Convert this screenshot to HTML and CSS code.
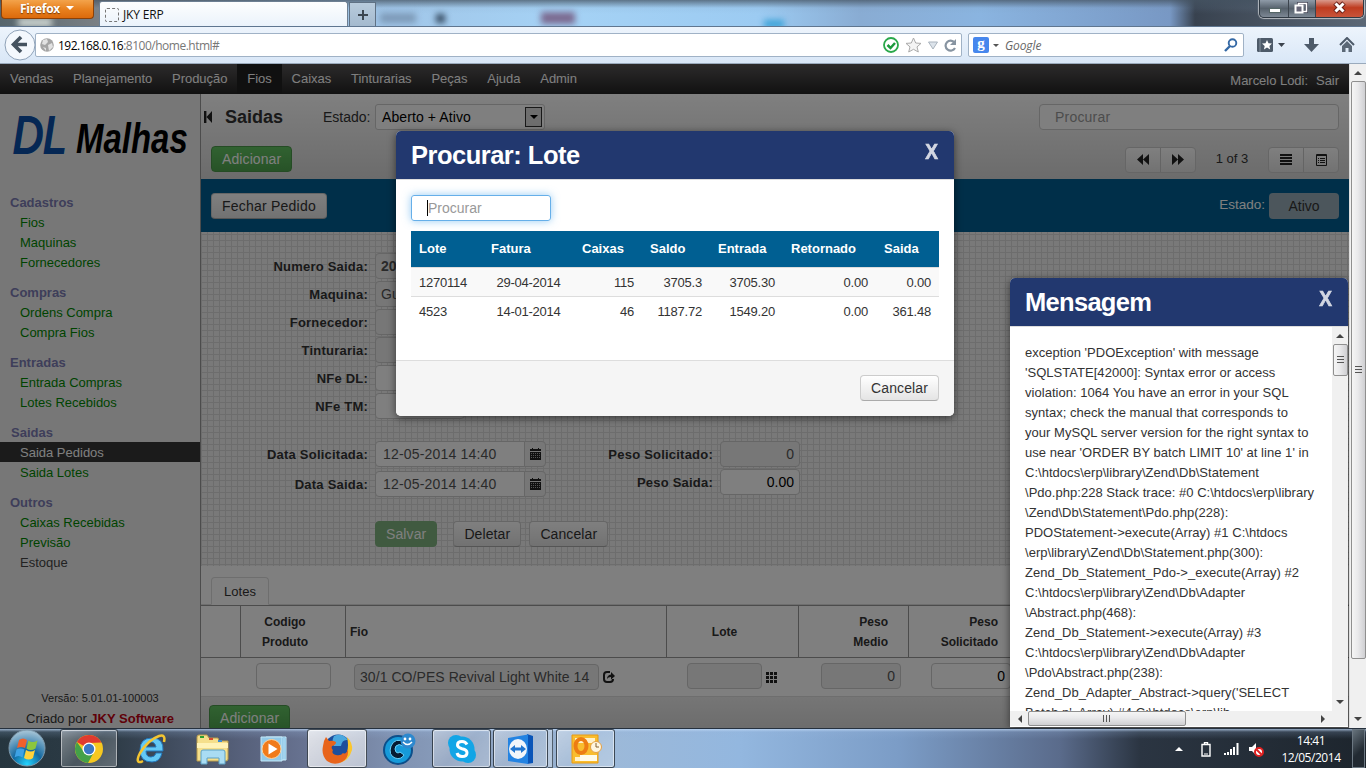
FILE: index.html
```html
<!DOCTYPE html>
<html lang="pt-BR">
<head>
<meta charset="utf-8">
<title>JKY ERP</title>
<link rel="stylesheet" href="styles.css">
</head>
<body>
<div class="screen">
  <header class="titlebar">
    <div class="blobs"><i class="b1"></i><i class="b2"></i><i class="b3"></i><i class="b4"></i><i class="b5"></i></div>
    <div class="ffbtn">Firefox <span class="tri"></span></div>
    <div class="tab"><i class="fav"></i><span>JKY ERP</span></div>
    <div class="newtab"><svg width="10" height="10"><path d="M5 0v10M0 5h10" stroke="#3c4650" stroke-width="2"/></svg></div>
    <div class="winbtns">
      <span class="wb"><svg width="28" height="18"><rect x="9.500" y="8.500" width="11" height="4" fill="#fff" stroke="#566"/></svg></span>
      <span class="wb"><svg width="26" height="18"><path d="M9.500 3.500h8v8h-8z" fill="none" stroke="#445" stroke-width="3"/><path d="M9.500 3.500h8v8h-8z" fill="none" stroke="#fff" stroke-width="1.500"/><rect x="6.500" y="5.500" width="7" height="7" fill="#667" stroke="#fff" stroke-width="2"/></svg></span>
      <span class="wb red"><svg width="47" height="18"><path d="M19 3l9 9M28 3l-9 9" stroke="#6a2018" stroke-width="5"/><path d="M19.500 3.500l8 8M27.500 3.500l-8 8" stroke="#fff" stroke-width="3"/></svg></span>
    </div>
  </header>

  <div class="toolbar">
    <div class="back"><svg width="32" height="32"><circle cx="16" cy="16" r="15" fill="#f4f8fd" stroke="#8fa2b8"/><path d="M17 8l-7.500 7.500L17 23M10 15.500h13" fill="none" stroke="#45525f" stroke-width="3.600"/></svg></div>
    <div class="url">
      <svg class="globe" width="14" height="14"><circle cx="7" cy="7" r="6.800" fill="#a5a5a5"/><path d="M3 2l4-1 1 3-3 3-3-1zM8 7l4-2 1 4-4 4zM3 9l3 1v3z" fill="#e2e2e2"/></svg>
      <span class="addr"><b>192.168.0.16</b>:8100/home.html#</span>
      <span class="urlicons">
        <svg width="16" height="16"><circle cx="8" cy="8" r="7" fill="#fff" stroke="#2aa84a" stroke-width="1.800"/><path d="M4.500 8l3 3 4.500-5" fill="none" stroke="#1c9a3c" stroke-width="2.500"/></svg>
        <svg width="17" height="16"><path d="M8.500 1l2.200 5 5.300.4-4 3.500 1.300 5.100-4.800-2.700L3.700 15 5 9.900l-4-3.500L6.300 6z" fill="#f4f4f4" stroke="#aaa"/></svg>
        <svg width="10" height="9"><path d="M.5 1h9L5 8z" fill="#dce3ea" stroke="#a9b3bd"/></svg>
        <svg width="13" height="13"><path d="M10.500 3.500A5 5 0 1 0 11 9" fill="none" stroke="#8794a1" stroke-width="2.200"/><path d="M12 0v6H6z" fill="#8794a1"/></svg>
      </span>
    </div>
    <div class="search">
      <span class="g">g</span><i class="sdown"></i><em>Google</em>
      <svg width="14" height="14"><circle cx="8.500" cy="5" r="3.800" fill="none" stroke="#3569a5" stroke-width="1.900"/><path d="M6 8L1 13" stroke="#3569a5" stroke-width="2.400"/></svg>
    </div>
    <div class="tools">
      <svg width="28" height="16"><rect x="0" y="1" width="16" height="14" rx="1.500" fill="#4d5a69"/><path d="M3 1v14" stroke="#8793a0"/><path d="M10 3l1.500 3.300 3.500.3-2.600 2.300.8 3.600-3.200-1.900-3.100 1.900.8-3.600L5 6.600l3.500-.3z" fill="#fff"/><path d="M21 6h7l-3.500 4z" fill="#3b434d"/></svg>
      <svg width="16" height="16"><path d="M5 1h5v6h5l-7.500 8L0 7h5z" fill="#4d5a69"/></svg>
      <svg width="16" height="16"><path d="M1 8l7-7 7 7" fill="none" stroke="#4d5a69" stroke-width="2"/><path d="M3 9l5-5 5 5v6H9.500v-4h-3v4H3z" fill="#5b6876"/></svg>
    </div>
  </div>

  <div class="view">
    <div class="page">
      <nav class="nav"><a>Vendas</a><a>Planejamento</a><a>Produção</a><a class="on">Fios</a><a>Caixas</a><a>Tinturarias</a><a>Peças</a><a>Ajuda</a><a>Admin</a><span class="user"><span>Marcelo Lodi:</span><span>Sair</span></span></nav>
      <div class="cols">
        <aside class="side">
          <svg class="logo" width="200" height="76"><text transform="translate(13 59) scale(.82 1)" class="dl">DL</text><text transform="translate(76 59) scale(.785 1)" class="ml">Malhas</text></svg>
          <div class="grp"><h4>Cadastros</h4><a>Fios</a><a>Maquinas</a><a>Fornecedores</a></div>
          <div class="grp"><h4>Compras</h4><a>Ordens Compra</a><a>Compra Fios</a></div>
          <div class="grp"><h4>Entradas</h4><a>Entrada Compras</a><a>Lotes Recebidos</a></div>
          <div class="grp"><h4 class="in">Saidas</h4><a class="cur">Saida Pedidos</a><a>Saida Lotes</a></div>
          <div class="grp"><h4>Outros</h4><a>Caixas Recebidas</a><a>Previsão</a><a class="off">Estoque</a></div>
          <div class="ver"><small>Versão: 5.01.01-100003</small><p>Criado por <b>JKY Software</b></p></div>
        </aside>
        <main class="main">
          <section class="head">
            <div class="hrow r1">
              <svg width="8" height="12"><path d="M0 0h2.400v12H0zM8 0v12L2.500 6z" fill="#222"/></svg>
              <h2>Saidas</h2><span class="est">Estado:</span>
              <div class="select">Aberto + Ativo<span class="dd"><i></i></span></div>
              <div class="find">Procurar</div>
            </div>
            <div class="hrow r2">
              <span class="btn green">Adicionar</span>
              <div class="bgroup pg"><span><svg width="12" height="11"><path d="M6 0v11L0 5.500zM12 0v11L6 5.500z"/></svg></span><span><svg width="12" height="11"><path d="M0 0v11l6-5.500zM6 0v11l6-5.500z"/></svg></span></div>
              <span class="count">1 of 3</span>
              <div class="bgroup"><span><svg width="12" height="11"><path d="M0 0h12v2H0zM0 3h12v2H0zM0 6h12v2H0zM0 9h12v2H0z"/></svg></span><span><svg width="11" height="12"><path d="M.5 .5h10v11H.5z" fill="none" stroke="#222"/><path d="M0 1.500h11" stroke="#222"/><path d="M2 4.500h1M4 4.500h5M2 6.500h1M4 6.500h5M2 8.500h1M4 8.500h5" stroke="#222"/></svg></span></div>
            </div>
          </section>
          <section class="band"><span class="btn">Fechar Pedido</span><span class="bl">Estado:</span><span class="ativo">Ativo</span></section>
          <section class="form">
            <div class="frow"><label>Numero Saida:</label><div class="inp dis bold w90">20</div></div>
            <div class="frow"><label>Maquina:</label><div class="inp dis w170">Gu</div></div>
            <div class="frow"><label>Fornecedor:</label><div class="inp dis w170"></div></div>
            <div class="frow"><label>Tinturaria:</label><div class="inp dis w170"></div></div>
            <div class="frow"><label>NFe DL:</label><div class="inp w90"></div></div>
            <div class="frow"><label>NFe TM:</label><div class="inp w90"></div></div>
            <div class="dates">
              <div class="dcol">
                <div class="frow"><label>Data Solicitada:</label><div class="inp date">12-05-2014 14:40</div><span class="cal"><svg width="11" height="12"><path d="M0 1h2V0h1v1h5V0h1v1h2v2H0zM0 4h11v8H0z"/><path d="M1 5.500h9M1 7.500h9M1 9.500h9" stroke="#aaa" stroke-dasharray="1 1"/></svg></span></div>
                <div class="frow"><label>Data Saida:</label><div class="inp date">12-05-2014 14:40</div><span class="cal"><svg width="11" height="12"><path d="M0 1h2V0h1v1h5V0h1v1h2v2H0zM0 4h11v8H0z"/><path d="M1 5.500h9M1 7.500h9M1 9.500h9" stroke="#aaa" stroke-dasharray="1 1"/></svg></span></div>
              </div>
              <div class="pcol">
                <div class="frow"><label>Peso Solicitado:</label><div class="inp dis num w80">0</div></div>
                <div class="frow"><label>Peso Saida:</label><div class="inp num w80 dark">0.00</div></div>
              </div>
            </div>
            <div class="acts"><span class="btn green faded">Salvar</span><span class="btn del">Deletar</span><span class="btn wide">Cancelar</span></div>
          </section>
          <section class="lots">
            <div class="tabs"><span>Lotes</span></div>
            <div class="lh"><div></div><div class="c">Codigo<br>Produto</div><div>Fio</div><div class="c lt">Lote</div><div class="r">Peso<br>Medio</div><div class="r">Peso<br>Solicitado</div><div></div></div>
            <div class="lr">
              <div></div>
              <div class="k1"><div class="inp w75"></div></div>
              <div class="k2"><div class="inp dis w245">30/1 CO/PES Revival Light White 14</div><svg width="12" height="12"><path d="M7 1H4Q1 1 1 4v4q0 3 3 3h3q3 0 3-3" fill="none" stroke="#222" stroke-width="2"/><path d="M4 8q0-4 4-4.500V1l4 4-4 3.500V6Q5 6 4 8z"/></svg></div>
              <div class="k3"><div class="inp dis w75"></div><svg width="11" height="11"><path d="M0 0h3v3H0zM4 0h3v3H4zM8 0h3v3H8zM0 4h3v3H0zM4 4h3v3H4zM8 4h3v3H8zM0 8h3v3H0zM4 8h3v3H4zM8 8h3v3H8z"/></svg></div>
              <div class="k1"><div class="inp dis num w80">0</div></div>
              <div class="k1"><div class="inp num w80 dark">0</div></div>
              <div></div>
            </div>
            <div class="lf"><span class="btn green">Adicionar</span></div>
          </section>
        </main>
      </div>
      <div class="shade"></div>

      <div class="modal lot">
        <div class="mh"><h3>Procurar: Lote</h3><b class="x">X</b></div>
        <div class="mb">
          <div class="focus"><i></i>Procurar</div>
          <table>
            <tr><th>Lote</th><th>Fatura</th><th>Caixas</th><th>Saldo</th><th>Entrada</th><th>Retornado</th><th>Saida</th></tr>
            <tr class="odd"><td>1270114</td><td>29-04-2014</td><td>115</td><td>3705.3</td><td>3705.30</td><td>0.00</td><td>0.00</td></tr>
            <tr><td>4523</td><td>14-01-2014</td><td>46</td><td>1187.72</td><td>1549.20</td><td>0.00</td><td>361.48</td></tr>
          </table>
        </div>
        <div class="mf"><span class="btn wide">Cancelar</span></div>
      </div>

      <div class="modal msg">
        <div class="mh"><h3>Mensagem</h3><b class="x">X</b></div>
        <div class="msgrow">
          <div class="text">exception 'PDOException' with message<br>'SQLSTATE[42000]: Syntax error or access<br>violation: 1064 You have an error in your SQL<br>syntax; check the manual that corresponds to<br>your MySQL server version for the right syntax to<br>use near 'ORDER BY batch LIMIT 10' at line 1' in<br>C:\htdocs\erp\library\Zend\Db\Statement<br>\Pdo.php:228 Stack trace: #0 C:\htdocs\erp\library<br>\Zend\Db\Statement\Pdo.php(228):<br>PDOStatement-&gt;execute(Array) #1 C:\htdocs<br>\erp\library\Zend\Db\Statement.php(300):<br>Zend_Db_Statement_Pdo-&gt;_execute(Array) #2<br>C:\htdocs\erp\library\Zend\Db\Adapter<br>\Abstract.php(468):<br>Zend_Db_Statement-&gt;execute(Array) #3<br>C:\htdocs\erp\library\Zend\Db\Adapter<br>\Pdo\Abstract.php(238):<br>Zend_Db_Adapter_Abstract-&gt;query('SELECT<br>Batch.n', Array) #4 C:\htdocs\erp\lib</div>
          <div class="sb v"><i class="au"></i><span class="th"><em></em></span><i class="ad"></i></div>
        </div>
        <div class="sb h"><i class="al"></i><span class="th"><em></em></span><i class="ar"></i></div>
      </div>
    </div>
    <div class="sb v pagebar"><i class="au"></i><span class="th"><em></em></span><i class="ad"></i></div>
  </div>

  <footer class="task">
    <span class="start"><svg width="40" height="38" viewBox="0 0 40 38"><defs><radialGradient id="orb" cx=".5" cy=".95" r=".9"><stop offset="0" stop-color="#22d4ff"/><stop offset=".45" stop-color="#1268a0"/><stop offset="1" stop-color="#9fc0d4"/></radialGradient></defs><circle cx="20" cy="19" r="18" fill="url(#orb)" stroke="#7f9aac"/><path d="M12 11q4-3 8 0l-2 8q-4-2-8 0z" fill="#f0612c"/><path d="M21.500 11.500q4 3 9 0l-2 8q-5 3-9 0z" fill="#8cc63e"/><path d="M9.500 20.500q4-2 8 0l-2 8q-4-3-8 0z" fill="#3ea2e5"/><path d="M19 21q5 3 9 0l-2 8q-4 3-9 0z" fill="#ffd23a"/></svg></span>
    <span class="tb t1"><svg width="30" height="30" viewBox="0 0 30 30"><circle cx="15" cy="15" r="14" fill="#f6c820"/><path d="M15 15L2.900 8A14 14 0 0 1 27.500 8.500L15 9z" fill="#e03a2f"/><path d="M2.900 8A14 14 0 0 0 14 29l6-11-10 0z" fill="#44a148"/><circle cx="15" cy="15" r="6.500" fill="#fff"/><circle cx="15" cy="15" r="5.200" fill="#3b78c4"/></svg></span>
    <span class="ti t2"><svg width="32" height="32" viewBox="0 0 32 32"><path d="M27 20h-6q-1 4-5 4-5 0-5-6h17Q29 5 17 5 5 5 5 17q0 12 12 12 8 0 10-9zM11 14q1-5 5-5t5 5z" fill="#63c8f5" stroke="#2378bd"/><path d="M29 9q2-8-5-6Q13 7 5 20q-5 10 1 9l2-1" fill="none" stroke="#f4c531" stroke-width="2.500"/></svg></span>
    <span class="ti t3"><svg width="34" height="32" viewBox="0 0 34 32"><path d="M1 4q0-2 2-2h8l2 3h9l1 3h9v18q0 2-2 2H1z" fill="#f5df8b" stroke="#b79a4b"/><path d="M1 10h31v5H1z" fill="#fff3b8"/><path d="M4 3h4v2H4z" fill="#2ca032"/><path d="M13 5h4v2h-4z" fill="#d84a2e"/><path d="M22 7h4v2h-4z" fill="#3b8ad2"/><path d="M5 31V19q0-2 2-2h20q2 0 2 2v12h-6v-6H11v6z" fill="#a9dcf3" stroke="#5ca1c5"/></svg></span>
    <span class="ti t4"><svg width="28" height="28" viewBox="0 0 28 28"><path d="M6 2h20v23H6z" fill="#6fb3dc" stroke="#c9ecfb"/><path d="M1 2h21v24H1z" fill="#92c9e8" stroke="#c4e8f8"/><path d="M24 3v22" stroke="#d6f2ff"/><circle cx="11.500" cy="14" r="9.500" fill="#f07a1a" stroke="#fbd3a0"/><path d="M8.500 8.500l9 5.500-9 5.500z" fill="#fff"/></svg></span>
    <span class="tb t5 lit"><svg width="32" height="32" viewBox="0 0 32 32"><circle cx="17" cy="14.500" r="13" fill="#1f4f9c"/><path d="M13 3q8-4 14 4-6-1-7 6l-7 0q-3-4 0-10z" fill="#4ba8de"/><path d="M26 4q6 6 5 13-3 11-13 13 12-9 8-26z" fill="#fbc62d"/><path d="M3 8l2-4 3 4q4-1 7 1 0 3-4 4-1 3 1 4-2 4 3 5 5 1 7-2 3 2 5-4 1 9-6 13-8 4-15-1Q0 22 2 13z" fill="#e8641b"/></svg></span>
    <span class="ti t6"><svg width="34" height="32" viewBox="0 0 34 32"><circle cx="15" cy="17" r="14" fill="#169ad9" stroke="#0d4f8a" stroke-width="2"/><path d="M22 9Q12 4 8 13q-3 9 4 12 6 2 9-3l-4-3q-2 2-4 0-2-3 0-6 3-3 7 0z" fill="#071b33" stroke="#69d2fb"/><circle cx="25" cy="8" r="7.500" fill="#2d88ce"/><circle cx="22" cy="6" r="1.400" fill="#fff"/><circle cx="27" cy="6" r="1.400" fill="#fff"/><path d="M20 9q4.500 5 9 0" fill="none" stroke="#fff" stroke-width="1.500"/></svg></span>
    <span class="tb t7"><svg width="30" height="30" viewBox="0 0 30 30"><circle cx="9" cy="9" r="8" fill="#12a5e6"/><circle cx="21" cy="21" r="8" fill="#12a5e6"/><circle cx="15" cy="15" r="12.500" fill="#12a5e6"/><path d="M20 10.500Q18.500 7.500 15 7.500q-4.500 0-4.500 3.500 0 2.500 4.500 3.700 5 1.100 5 4 0 3.800-5 3.800-4 0-5-3.500" fill="none" stroke="#fff" stroke-width="3"/></svg></span>
    <span class="tb t8"><svg width="28" height="32" viewBox="0 0 28 32"><path d="M20 1l6 2v27l-6 1z" fill="#0a55b8"/><path d="M1 5l20-3.500V31L1 28z" fill="#2383e2"/><ellipse cx="11" cy="16" rx="9" ry="10" fill="#f2f6fa"/><path d="M3 16l5-4v2.500h6V12l5 4-5 4v-2.500H8V20z" fill="#2276cf"/></svg></span><span class="stack"></span>
    <span class="tb t9"><svg width="32" height="32" viewBox="0 0 32 32"><path d="M2 2h26v28H2z" fill="#f9bd2e" stroke="#e79a15"/><path d="M5 5h20v5H5zM5 24h22v4H5z" fill="#fff1c9"/><path d="M10 22h17v6H10z" fill="#fffbe9"/><ellipse cx="11" cy="13" rx="5.500" ry="7" fill="none" stroke="#ed7d13" stroke-width="4"/><circle cx="26" cy="14" r="5.500" fill="#fff6df" stroke="#e5a042"/><path d="M26 10v4h3" fill="none" stroke="#856030"/></svg></span>
    <span class="tray">
      <svg width="8" height="4"><path d="M4 0l4 4H0z" fill="#fff"/></svg>
      <svg width="10" height="15"><path d="M3.500 2V.500h3V2M1 2.500h8v11.500H1z" fill="none" stroke="#fff" stroke-width="1.400"/><path d="M3 12h4" stroke="#fff"/></svg>
      <svg width="15" height="12"><path d="M0 10h2v2H0zM3 9h2v3H3zM6 6h2v6H6zM9 4h2v8H9zM12.500 0h2v12h-2z" fill="#fff"/></svg>
      <svg width="15" height="15"><path d="M0 5h3l4-4v12l-4-4H0z" fill="#fff"/><circle cx="10" cy="10" r="4" fill="#fff" stroke="#e02020" stroke-width="2"/><path d="M7.500 7.500l5 5" stroke="#e02020" stroke-width="2"/></svg>
    </span>
    <span class="clock">14:41<br>12/05/2014</span>
    <span class="peek"></span>
  </footer>
</div>
</body>
</html>
```
FILE: styles.css
```css
*{box-sizing:border-box}
body{margin:0;overflow:hidden;font:13px/20px "Liberation Sans",Arial,sans-serif;color:#333}
h2,h3,h4,p{margin:0}
svg{display:block;flex:none}
.screen{width:1366px;height:768px;display:flex;flex-direction:column;overflow:hidden}

/* window frame */
.titlebar{height:27px;display:flex;position:relative;overflow:hidden;border-bottom:1px solid #5f7690;background:linear-gradient(rgba(70,85,100,.75),rgba(120,150,180,.1) 8px,transparent 14px),linear-gradient(90deg,#56656c 0,#7b8085 100px,#a0c4e6 360px,#a5d2f5 560px,#9ccbf2 760px,#89acd3 860px,#8ab4e0 980px,#7898c4 1170px,#38424f 1195px,#5c6876 1366px)}
.blobs{position:absolute;inset:0;filter:blur(3px)}
.blobs i{position:absolute}
.b1{left:18px;top:18px;width:34px;height:9px;background:#cbd3cf}
.b2{left:380px;top:13px;width:36px;height:10px;background:#7d9ab8}
.b3{left:436px;top:14px;width:9px;height:9px;background:#33485e}
.b4{left:541px;top:12px;width:34px;height:12px;background:#7b6a90}
.b5{left:728px;top:20px;width:20px;height:8px;background:#3aa3d8;transform:translateX(36px)}
.ffbtn{position:relative;width:93px;height:19px;margin-left:1px;border:1px solid #8b4108;border-top:0;border-radius:0 0 4px 4px;background:linear-gradient(#f3a34b,#e8811f 50%,#dc6a0c);color:#fff;font:bold 12px/17px "Open Sans",sans-serif;padding-left:18px;text-shadow:0 1px 1px #7a3c08;letter-spacing:-.25px}
.tri{display:inline-block;border:4px solid transparent;border-top-color:#fff;border-bottom:0;margin:0 0 3px 3px}
.tab{position:relative;margin:1px 0 0 5px;width:249px;height:26px;border:1px solid #6d7f92;border-bottom:0;border-radius:3px 3px 0 0;background:linear-gradient(#fdfefe,#eaf2fb);display:flex;align-items:center;gap:4px;padding-left:5px;font:12px/16px "Open Sans",sans-serif;color:#111;letter-spacing:-.15px}
.fav{width:14px;height:14px;border:1px dashed #777;border-radius:2px}
.newtab{position:relative;width:27px;height:25px;margin:2px 0 0 1px;border:1px solid #5f7184;border-bottom:0;background:linear-gradient(#b8cbdc,#a3b9ce);display:flex;align-items:center;justify-content:center}
.winbtns{position:relative;margin:0 2px 0 auto;height:18px;display:flex;border:1px solid #303a44;border-top:0;border-radius:0 0 5px 5px;overflow:hidden;box-shadow:0 0 1px 1px rgba(255,255,255,.6)}
.wb{background:linear-gradient(#8f9ba8,#56616c 50%,#7d8894);border-right:1px solid #3c444d}
.wb.red{background:linear-gradient(#d99a8c,#bf3c20 45%,#c8543a);border:0}
.toolbar{height:37px;background:linear-gradient(#edf4fc,#d9e7f7);border-bottom:1px solid #9aaabc;display:flex;align-items:center;padding-left:4px}
.back{position:relative;z-index:2;width:32px}
.url{width:927px;height:24px;margin-left:-1px;border:1px solid #a0b2c6;border-radius:2px;background:#fff;display:flex;align-items:center;padding:0 4px 0 4px}
.addr{margin-left:4px;font:12px/18px "Open Sans",sans-serif;color:#777;letter-spacing:-.5px;padding-top:1px}
.addr b{font-weight:400;color:#000}
.urlicons{margin-left:auto;display:flex;align-items:center;gap:6px}
.search{width:276px;height:24px;margin-left:6px;border:1px solid #a0b2c6;border-radius:2px;background:#fff;display:flex;align-items:center;padding:0 5px 0 4px}
.g{width:16px;height:16px;background:#4787ed;border-radius:2px;color:#fff;font:bold 15px/12px "Liberation Serif",serif;text-align:center}
.sdown{border:3px solid transparent;border-top-color:#555;border-bottom:0;margin:0 6px 0 4px}
.search em{font:italic 12px/16px "Open Sans",sans-serif;color:#666;letter-spacing:-.1px;padding-top:1px}
.search svg{margin-left:auto}
.tools{display:flex;align-items:center;gap:19px;margin-left:13px}

/* application page */
.view{height:664px;display:flex}
.page{width:1349px;height:664px;position:relative;overflow:hidden;background:#fff;display:flex;flex-direction:column}
.nav{height:30px;flex:none;display:flex;background:linear-gradient(#595657,#222);color:#fff;line-height:29px;letter-spacing:-.03px}
.nav a{padding:0 9.850px 0 10px}
.nav a.on{background:#202020}
.user{margin:1px 10px 0 auto;display:flex;gap:8px;line-height:31px}
.cols{flex:1;display:flex;min-height:0}
.side{width:201px;border-right:1px solid #999;background:#efefef;position:relative;display:flex;flex-direction:column;gap:10px}
.logo{margin-bottom:12px}
.dl{font:italic 51px "Liberation Sans",sans-serif;fill:#0b4fa8;stroke:#0b4fa8;stroke-width:2.200}
.ml{font:italic bold 42px "Liberation Sans",sans-serif;fill:#000}
.grp h4{font-size:13px;line-height:22px;height:20px;padding-left:10px;color:#7c7cb4}
.grp h4.in{padding-left:11px}
.grp a{display:block;line-height:22px;height:20px;padding-left:20px;color:#080}
.grp a.cur{background:#363636;color:#fff;line-height:21px}
.grp a.off{color:#444}
.ver{margin-top:auto;text-align:center;line-height:20px}
.ver small{font-size:11px;display:block}
.ver p{line-height:22px;height:20px}
.ver b{color:#c00010}
.main{flex:1;display:flex;flex-direction:column;min-width:0;font-size:14px}
.head{height:85px;flex:none;background:linear-gradient(#fff,#d8d8d8);padding:10px 10px 0}
.hrow{display:flex;align-items:center;height:26px}
.r1{margin-left:-7px}
.r2{margin-top:16px}
h2{font-size:18px;line-height:26px;margin-left:13px;width:98px;color:#333}
.est{width:52px}
.select{width:170px;height:26px;border:1px solid #ccc;border-radius:3px;background:#fff;color:#000;padding-left:6px;line-height:24px;display:flex;justify-content:space-between;align-items:center;padding-right:2px;letter-spacing:.1px}
.dd{width:17px;height:20px;border:1px solid #333;background:#ddd;display:flex;align-items:center;justify-content:center}
.dd i{border:4px solid transparent;border-top-color:#000;border-bottom:0}
.find{margin-left:auto;width:300px;height:26px;border:1px solid #ccc;border-radius:4px;background:#fff;color:#999;line-height:24px;padding-left:15px;letter-spacing:.2px}
.btn{display:inline-block;height:26px;padding:0 10px;border:1px solid #ccc;border-bottom-color:#aaa;border-radius:4px;background:linear-gradient(#fff,#e4e4e4);font-size:14px;line-height:24px;color:#333;white-space:nowrap;letter-spacing:.1px}
.btn.wide{width:79px;padding:0;text-align:center}
.btn.green{background:linear-gradient(#62c462,#4fa54f);border-color:#4a984a;color:#fff}
.btn.faded{background:#80b480;border-color:#80b480}
.bgroup{display:flex;border:1px solid #ccc;border-radius:4px;background:linear-gradient(#fff,#e4e4e4);height:26px;width:71px;margin-top:1px}
.bgroup span{flex:1;display:flex;align-items:center;justify-content:center}
.bgroup span+span{border-left:1px solid #c8c8c8}
.bgroup svg,.cal svg,.lr svg{fill:#222}
.pg{margin-left:auto}
.count{width:72px;text-align:center;font-size:13px;padding-right:0}
.band{height:53px;flex:none;background:#005f92;display:flex;align-items:flex-start;padding:14px 10px 0}
.band .btn{letter-spacing:.22px}
.bl{margin-left:auto;color:#fff;margin-right:4px;line-height:23px;font-size:13.500px}
.ativo{width:70px;height:26px;border-radius:4px;background:#99adb8;color:#333;text-align:center;line-height:26px}
.form{height:334px;flex:none;padding-top:21px;background-color:#f2f2f2;background-image:linear-gradient(#dadada 1px,transparent 1px),linear-gradient(90deg,#dadada 1px,transparent 1px);background-size:6px 6px;background-position:0 2px,0 0}
.frow{display:flex;height:26px;margin-bottom:2px}
.frow label{width:167px;margin-right:7px;text-align:right;font-weight:bold;font-size:13px;line-height:27px;letter-spacing:.22px;white-space:nowrap}
.inp{height:26px;border:1px solid #ccc;border-radius:4px;background:#fff;font-size:14px;line-height:24px;padding:0 6px 0 5px;color:#555;overflow:hidden;white-space:nowrap}
.dis{background:#eee}
.bold{font-weight:bold}
.w75{width:75px}.w80{width:80px}.w90{width:90px}.w170{width:170px}.w245{width:245px;letter-spacing:.06px}
.num{text-align:right;padding-right:5px}
.dark{color:#000}
.dates{display:flex;margin-top:22px}
.dcol .frow{margin-bottom:4px}
.date{width:150px;border-radius:4px 0 0 4px;padding-left:7px;letter-spacing:.18px}
.cal{width:22px;margin-left:-1px;border:1px solid #ccc;border-radius:0 4px 4px 0;background:#eee;display:flex;align-items:center;justify-content:center}
.pcol .frow label{width:167px}
.acts{display:flex;padding:20px 0 0 174px}
.del{margin:0 8px 0 16px}
.acts .del{width:68px;padding:0;text-align:center}
.lots{flex:1;display:flex;flex-direction:column;min-height:0;background:#fff}
.tabs{height:39px;flex:none;padding:11px 0 0 10px;border-bottom:1px solid #ddd;display:flex}
.tabs span{width:58px;height:28px;border:1px solid #ddd;border-bottom-color:#fff;border-radius:4px 4px 0 0;background:#fff;text-align:center;font-size:13px;line-height:28px}
.lh,.lr{display:grid;grid-template-columns:39px 105px 321px 132px 110px 110px 1fr;flex:none}
.lh{height:53px;border-top:1px solid #999;border-bottom:1px solid #999;font-weight:bold;font-size:12px;line-height:20px}
.lh div{border-left:1px solid #999;padding:6px 0 0 4px}
.lh div:first-child{border:0}
.lh div:nth-child(3){padding-top:16px}
.lh .c{text-align:center;padding:6px 16px 0 0}
.lh .lt{padding-top:16px}
.lh .r{text-align:right;padding:6px 20px 0 0}
.lr{height:38px;padding-top:5px}
.k1{padding-left:16px}
.k1 .w80{margin-left:7px}
.k2,.k3{display:flex;align-items:center;gap:4px}
.k2{padding:1px 0 0 9px}
.k3{padding-left:21px;height:26px}
.k3 svg{margin-top:3px}
.k2{height:27px}
.lf{flex:1;background:linear-gradient(#ececec,#d8d8d8);border-top:1px solid #ddd;padding:8px 0 0 8px}
.shade{position:absolute;inset:0;background:rgba(0,0,0,.5)}

/* dialogs */
.modal{position:absolute;border-radius:5px;box-shadow:0 2px 8px rgba(0,0,0,.55);overflow:hidden;background:#fff}
.mh{height:48px;background:#22386f;color:#fff;display:flex;justify-content:space-between;padding:0 15px}
.mh h3{font-size:25.500px;line-height:49px;letter-spacing:-.5px}
.msg h3{letter-spacing:-.7px}
.x{font-size:22.500px;line-height:42px;color:#d3d7e2;-webkit-text-stroke:.7px #d3d7e2;transform:scaleX(.85)}
.lot{left:396px;top:67px;width:558px;height:285px;display:flex;flex-direction:column}
.mb{flex:1;padding:15px 15px 0;border-top:1px solid #ddd}
.focus{width:140px;height:26px;border:1px solid #66afe9;border-radius:3px;box-shadow:0 0 8px rgba(82,168,236,.6);color:#999;font-size:14px;line-height:24px;padding-left:15px;display:flex;align-items:center}
.focus i{width:1px;height:16px;background:#000}
table{width:528px;margin-top:10px;border-collapse:collapse;table-layout:fixed}
th{height:36px;background:#005f92;color:#fff;text-align:left;padding:0 8px}
td{height:29px;border-top:1px solid #ddd;padding:2px 8px 0;text-align:right;letter-spacing:-.23px}
th:nth-child(1){width:72px}th:nth-child(2){width:91px}th:nth-child(3){width:68px}th:nth-child(4){width:68px}th:nth-child(5){width:73px}th:nth-child(6){width:93px}
td:nth-child(1){text-align:left}td:nth-child(2){text-align:center}
.odd{background:#f9f9f9}
.mf{height:56px;background:#f5f5f5;border-top:1px solid #ddd;padding:14px 15px;text-align:right}
.msg{left:1010px;top:214px;width:338px;height:449px;border-radius:5px 5px 0 0}
.msgrow{display:flex;height:385px;border-top:1px solid #ddd}
.text{width:322px;height:384px;overflow:hidden;padding:16px 0 0 15px;white-space:nowrap;letter-spacing:.03px}
.sb{background:#f0f0f0;display:flex;align-items:center}
.sb i{border:4px solid transparent;flex:none}
.sb .th{border:1px solid #8f8f8f;border-radius:2px;display:flex;align-items:center;justify-content:center;flex:none}
.v{flex-direction:column;width:16px}
.v .th{width:15px;height:32px;margin-top:6px;background:linear-gradient(90deg,#f5f5f5,#e9e9eb 45%,#cfcfd2)}
.v em{width:7px;height:8px;background:repeating-linear-gradient(#555 0 1px,transparent 1px 3px)}
.v .au{border-bottom-color:#444;border-top:0;margin-top:7px}
.v .ad{border-top-color:#444;border-bottom:0;margin:auto 0 7px}
.h{height:15px;width:338px}
.h .th{height:15px;width:158px;margin-left:6px;background:linear-gradient(#f5f5f5,#e9e9eb 45%,#cfcfd2)}
.h em{width:8px;height:7px;background:repeating-linear-gradient(90deg,#555 0 1px,transparent 1px 3px)}
.h .al{border-right-color:#444;border-left:0;margin-left:8px}
.h .ar{border-left-color:#444;border-right:0;margin:0 23px 0 auto}
.pagebar{width:17px;border-left:1px solid #ddd}
.pagebar .th{width:15px;height:578px}
.pagebar .au{margin-top:7px}

/* taskbar */
.task{height:40px;display:flex;align-items:flex-start;border-top:1px solid #26313e;background:linear-gradient(rgba(190,215,245,.75),rgba(150,180,220,.2) 3px,transparent 10px),linear-gradient(90deg,#26363f 0,#2d3b46 110px,#56607a 240px,#66718f 300px,#8193b2 400px,#9db9d8 600px,#93b7df 740px,#7b9cc6 900px,#5a6b8b 1060px,#2b3542 1140px,#1d252d 1366px);color:#fff}
.start{margin-left:7px;width:53px}
.tb,.ti{height:39px;width:58px;display:flex;align-items:center;justify-content:center;flex:none}
.tb{border:1px solid rgba(30,40,50,.8);border-radius:3px;background:linear-gradient(135deg,rgba(255,255,255,.4),rgba(255,255,255,.15) 50%,rgba(255,255,255,.25));box-shadow:inset 0 0 0 1px rgba(255,255,255,.5)}
.tb.lit{background:linear-gradient(135deg,rgba(255,255,255,.8),rgba(255,255,255,.5))}
.t2{margin-left:4px}
.t3{margin-left:4px}
.t4{margin-left:3px}
.t5{margin-left:4px;width:60px}
.t6{margin-left:4px}
.t7{margin-left:3px;width:59px}
.t8{margin-left:2px;width:55px}
.stack{width:5px;height:39px;border:1px solid rgba(40,50,60,.7);border-left:0;background:rgba(255,255,255,.3)}
.t9{margin-left:3px;width:59px}
.tray{margin-left:auto;display:flex;align-items:center;gap:13px;height:40px;padding-right:17px}
.tray svg:nth-child(1){margin-right:5px}
.tray svg:nth-child(3){margin-right:-3px}
.clock{font:12px/17px "Open Sans",sans-serif;text-align:center;width:60px;padding-top:3px;letter-spacing:-.45px;white-space:nowrap}
.peek{width:13px;height:39px;margin-left:11px;margin-right:1px;border:1px solid #6c7882;background:linear-gradient(135deg,#66727c,#222a32 60%)}
```
